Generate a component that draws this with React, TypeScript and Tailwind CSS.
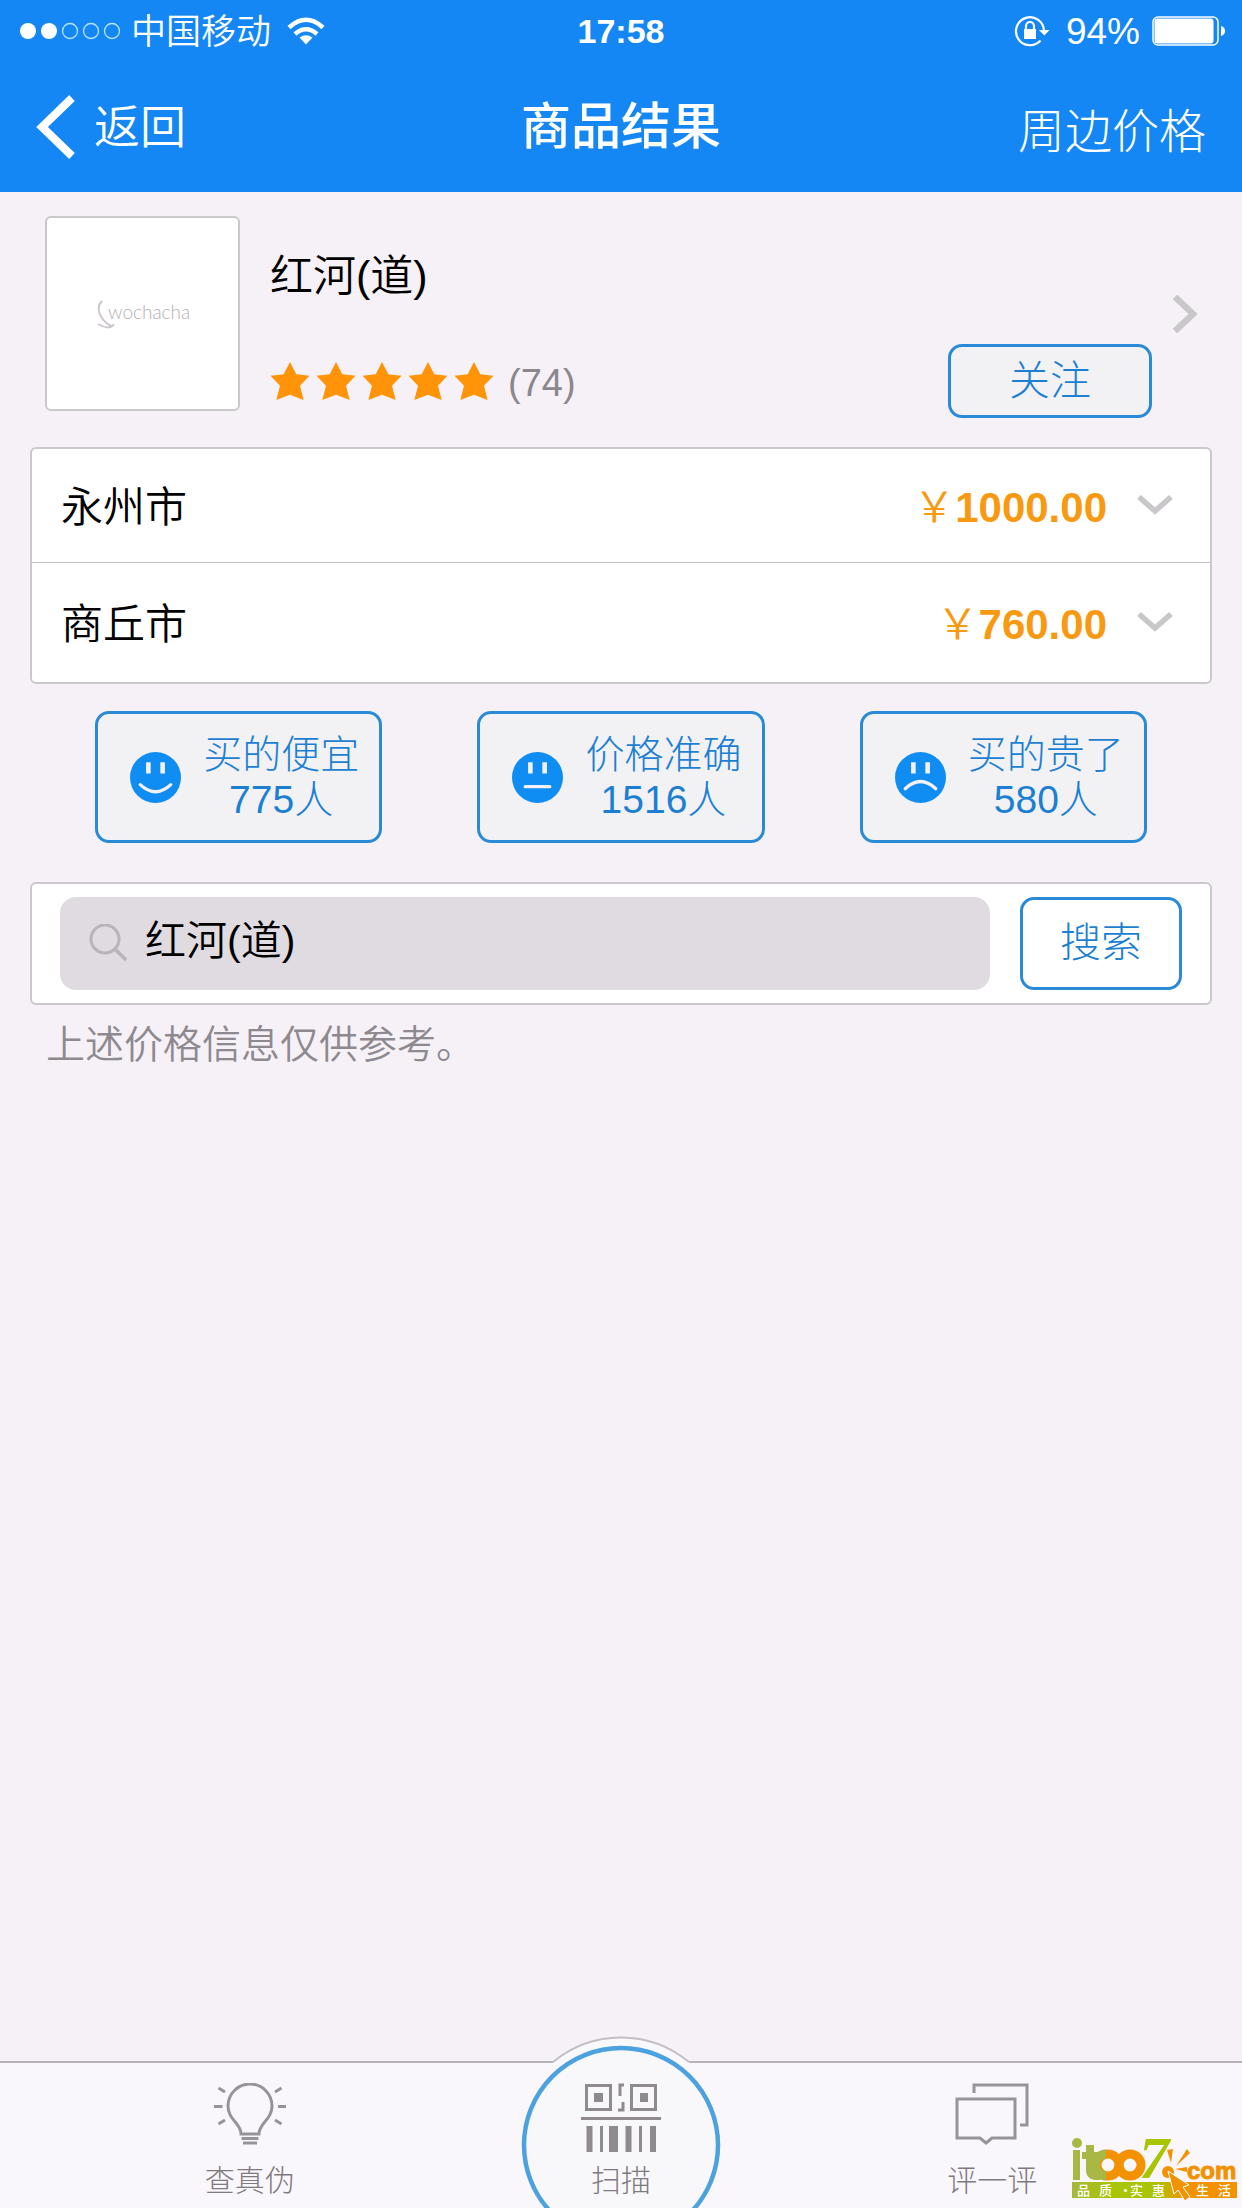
import type { ReactNode } from 'react';

type Mood = 'happy' | 'neutral' | 'sad';

const prices = [
  { city: '永州市', price: '1000.00' },
  { city: '商丘市', price: '760.00' },
];

const votes: { label: string; count: number; mood: Mood }[] = [
  { label: '买的便宜', count: 775, mood: 'happy' },
  { label: '价格准确', count: 1516, mood: 'neutral' },
  { label: '买的贵了', count: 580, mood: 'sad' },
];

const mouths: Record<Mood, string> = {
  happy: 'M10 32Q25 46 40 32',
  neutral: 'M13 34H37',
  sad: 'M10 36Q25 22 40 36',
};

const Face = ({ mood }: { mood: Mood }) => (
  <svg width="51" height="51" viewBox="0 0 50 50" fill="none" aria-hidden="true">
    <circle cx="25" cy="25" r="25" fill="#0f8df2" />
    <path d="M18 10V21M32 10V21" stroke="#f4f1f6" strokeWidth="4.500" />
    <path d={mouths[mood]} stroke="#f4f1f6" strokeWidth="3.200" strokeLinecap="round" />
  </svg>
);

const Star = () => (
  <svg width="40" height="40" viewBox="0 0 38 38" aria-hidden="true">
    <path
      d="M19 1L25 12.500L37.500 14L28.500 23.400L32 37L19 32L6 37L9.500 23.400L0.500 14L13 12.500Z"
      fill="#ff9408"
    />
  </svg>
);

const ChevronDown = () => (
  <svg width="36" height="22" viewBox="0 0 36 22" fill="none" aria-hidden="true">
    <path d="M2 2L18 16L34 2" stroke="#cac7cb" strokeWidth="5.500" />
  </svg>
);

const StatusBar = () => (
  <div className="grid h-[62px] grid-cols-3 items-center px-4">
    <div className="flex items-center pl-1">
      <svg width="101" height="18" viewBox="0 0 101 18" aria-hidden="true">
        <circle cx="8" cy="9" r="8" fill="#fff" />
        <circle cx="29" cy="9" r="8" fill="#fff" />
        {[50, 71, 92].map((cx) => (
          <circle key={cx} cx={cx} cy="9" r="7.500" fill="none" stroke="#b9e4ff" strokeWidth="1.3" />
        ))}
      </svg>
      <span className="ml-[10px] text-[35px] leading-none">中国移动</span>
      <svg className="ml-4" width="38" height="28" viewBox="0 0 38 28" fill="none" aria-hidden="true">
        <path d="M2 10.500Q19 -5 36 10.500" stroke="#fff" strokeWidth="4.5" />
        <path d="M8 17Q19 7.500 30 17" stroke="#fff" strokeWidth="4.5" />
        <path d="M12.500 20.500Q19 16 25.500 20.500L19 27.500Z" fill="#fff" />
      </svg>
    </div>
    <span className="text-center text-[34px] leading-none font-bold">17:58</span>
    <div className="flex items-center justify-end">
      <svg width="36" height="32" viewBox="0 0 36 32" fill="none" aria-hidden="true">
        <path d="M26.500 25.500A14 14 0 1 1 30 16" stroke="#fff" strokeWidth="2.200" />
        <path d="M25 15H35.500L30.300 20.500Z" fill="#fff" />
        <rect x="10" y="14" width="12" height="10" fill="#fff" />
        <path d="M12 14V11A4 4 0 0 1 20 11V14" stroke="#fff" strokeWidth="2.200" />
      </svg>
      <span className="mr-3 ml-4 text-[37px] leading-none">94%</span>
      <svg width="74" height="30" viewBox="0 0 74 30" fill="none" aria-hidden="true">
        <rect x="1" y="1" width="65" height="28" rx="5" stroke="#fff" strokeWidth="1.500" />
        <rect x="2.500" y="2.500" width="59" height="25" rx="3" fill="#fff" />
        <path d="M69 10Q73 11 73 15Q73 19 69 20Z" fill="#fff" />
      </svg>
    </div>
  </div>
);

const Header = () => (
  <header className="bg-[#1487f5] text-white">
    <StatusBar />
    <div className="grid h-[130px] grid-cols-3 items-center px-9">
      <a href="#back" className="flex items-center gap-[18px] text-[46px] leading-none">
        <svg width="40" height="64" viewBox="0 0 40 64" fill="none" aria-hidden="true">
          <path d="M36 3L6 32L36 61" stroke="#fff" strokeWidth="8" />
        </svg>
        返回
      </a>
      <h1 className="text-center text-[50px] leading-none font-medium">商品结果</h1>
      <a href="#nearby" className="pt-2 text-right text-[47px] leading-none font-light">周边价格</a>
    </div>
  </header>
);

const Product = () => (
  <section className="flex items-start pt-6 pr-11 pb-[29px] pl-[45px]">
    <div className="flex h-[195px] w-[195px] items-center justify-center rounded-md border-2 border-[#cbc8cc] bg-white">
      <svg width="94" height="32" viewBox="0 0 94 32" fill="none" role="img" aria-label="wochacha">
        <path d="M6 3C-1 10 4 22 15 28M2 26C8 30 15 31 18 26" stroke="#cdc8cd" strokeWidth="2" />
        <text x="12" y="21" fontSize="19" fill="#b5aeb5" fontFamily="Lato, sans-serif">
          wochacha
        </text>
      </svg>
    </div>
    <div className="flex-1 pt-[34px] pl-[30px]">
      <h2 className="text-[43px] leading-[52px] text-black">红河(道)</h2>
      <div className="mt-[42px] flex items-center justify-between">
        <div className="flex items-center gap-1.5">
          {[1, 2, 3, 4, 5].map((n) => (
            <Star key={n} />
          ))}
          <span className="pt-1 pl-2 text-[38px] leading-none text-[#8b878c]">(74)</span>
        </div>
        <button className="h-[74px] w-[204px] rounded-[14px] border-3 border-[#2a8ad6] bg-[#f2f2f5] text-[41px] leading-none font-light text-[#1c7fd2]">
          关注
        </button>
      </div>
    </div>
    <a href="#detail" aria-label="商品详情" className="flex h-[195px] items-center pl-5">
      <svg width="26" height="38" viewBox="0 0 26 38" fill="none">
        <path d="M3 2L21 19L3 36" stroke="#cac7cb" strokeWidth="6.500" />
      </svg>
    </a>
  </section>
);

const PriceList = () => (
  <ul className="mx-[30px] divide-y divide-[#c4c1c5] rounded-md border-2 border-[#cbc8cc] bg-white">
    {prices.map((item) => (
      <li key={item.city} className="h-[119px] first:h-[114px]">
        <button className="flex h-full w-full items-center pr-[37px] pl-[29px] text-[42px] leading-none">
          <span className="pt-1 text-black">{item.city}</span>
          <span className="ml-auto pt-1 text-[#f79a12]">
            {'\uffe5'}
            <span className="font-bold">{item.price}</span>
          </span>
          <span className="ml-[30px]">
            <ChevronDown />
          </span>
        </button>
      </li>
    ))}
  </ul>
);

const Votes = () => (
  <section className="mt-[27px] grid grid-cols-3 gap-[95px] px-[95px]">
    {votes.map((vote) => (
      <button
        key={vote.mood}
        className="flex h-33 items-center justify-center gap-[22px] rounded-[14px] border-3 border-[#2a8ad6] bg-[#f2f2f5] pl-3 text-[39px] leading-[45px] font-light text-[#1c7fd2]"
      >
        <Face mood={vote.mood} />
        <span>
          {vote.label}
          <br />
          {vote.count}人
        </span>
      </button>
    ))}
  </section>
);

const SearchBox = () => (
  <form className="mx-[30px] mt-[39px] flex gap-[30px] rounded-md border-2 border-[#cbc8cc] bg-white px-7 py-[13px]">
    <label className="flex h-[93px] flex-1 items-center rounded-2xl bg-[#dfdbe0] pl-[29px]">
      <svg width="40" height="40" viewBox="0 0 40 40" fill="none" aria-hidden="true">
        <circle cx="16" cy="15" r="14" stroke="#b8b4b9" strokeWidth="3" />
        <path d="M26 25L37 36" stroke="#b8b4b9" strokeWidth="3.500" />
      </svg>
      <input
        type="text"
        aria-label="搜索商品"
        defaultValue="红河(道)"
        className="min-w-0 flex-1 bg-transparent pb-1 pl-4 text-[41px] text-black outline-none"
      />
    </label>
    <button
      type="button"
      className="w-[162px] rounded-[14px] border-3 border-[#2a8ad6] text-[41px] leading-none font-light text-[#1c7fd2]"
    >
      搜索
    </button>
  </form>
);

const Tab = ({ label, href, children }: { label: string; href: string; children: ReactNode }) => (
  <a href={href} className="relative flex flex-col items-center pt-5">
    {children}
    <span className="mt-[18px] text-[30px] leading-9 font-light">{label}</span>
  </a>
);

const TabBar = () => (
  <nav className="relative grid h-[147px] grid-cols-3 border-t-2 border-[#b6b2b7] bg-[#faf7fc] px-16 text-[#7f7a80]">
    {/* raised disc behind the scan tab */}
    <svg
      className="absolute bottom-0 left-1/2 -translate-x-1/2"
      width="216"
      height="172"
      viewBox="0 0 216 172"
      fill="none"
      aria-hidden="true"
    >
      <path d="M40 26Q70 1.500 108 1.500Q146 1.500 176 26V30H40Z" fill="#f9f8fc" />
      <path d="M40 26Q70 1.500 108 1.500Q146 1.500 176 26" stroke="#c3bec2" strokeWidth="2" />
      <circle cx="108" cy="109" r="97" fill="#f8f8fb" stroke="#4ba2de" strokeWidth="4.500" />
    </svg>
    <Tab label="查真伪" href="#verify">
      <svg width="72" height="62" viewBox="0 0 72 62" fill="none" stroke="#989399" strokeWidth="3" aria-hidden="true">
        <path d="M27 51C27 40 14 37 14 23A22 22 0 0 1 58 23C58 37 45 40 45 51Z" />
        <path d="M27.500 55.500H44.500M29 60H43" />
        <path d="M0 23.500H8.500M64 23.500H72M4.500 5L11 9M67.500 5L61 9M4.500 41L11 37M67.500 41L61 37" />
      </svg>
    </Tab>
    <Tab label="扫描" href="#scan">
      <svg width="80" height="70" viewBox="0 0 80 70" fill="none" className="-mb-2" stroke="#8f8a90" aria-hidden="true">
        <path d="M5.500 2.500H29.500V26.500H5.500ZM50.500 2.500H74.500V26.500H50.500Z" strokeWidth="3" />
        <path d="M13 10H22V19H13ZM59 10H67V19H59Z" fill="#8f8a90" stroke="none" />
        <path d="M43 2H39V13M42 19V27H37" strokeWidth="3" />
        <path d="M0 35.500H80" strokeWidth="3" />
        <path d="M8.500 43V69M72 43V69M47.500 43V69" strokeWidth="6" />
        <path d="M20.500 43V69M59.500 43V69" strokeWidth="3" />
        <path d="M32.500 43V69" strokeWidth="9" />
      </svg>
    </Tab>
    <Tab label="评一评" href="#review">
      <svg width="74" height="62" viewBox="0 0 74 62" fill="none" stroke="#989399" strokeWidth="3" aria-hidden="true">
        <path d="M2 16H60V55H37L31 60L25 55H2Z" />
        <path d="M19 10V2H72V42H65" />
      </svg>
    </Tab>
  </nav>
);

const Watermark = () => (
  <svg
    className="absolute right-1 bottom-1"
    width="168"
    height="84"
    viewBox="0 -16 168 84"
    role="img"
    aria-label="itoo7.com 品质·实惠生活"
  >
    <defs>
      <linearGradient id="strip" x1="0" x2="1">
        <stop offset="0" stopColor="#a6b93a" />
        <stop offset="0.25" stopColor="#a9c400" />
        <stop offset="0.5" stopColor="#a9c400" />
        <stop offset="0.7" stopColor="#f39200" />
      </linearGradient>
    </defs>
    <circle cx="7" cy="7" r="5" fill="#a9b745" />
    <path d="M3 14H10V44H3Z" fill="#a9b745" />
    <path d="M16 9H24V16H31V23H24V33Q24 36 30 35V44Q16 45 16 34V23H12V16H16Z" fill="#a9b745" />
    <circle cx="38" cy="29" r="11" fill="none" stroke="#f39200" strokeWidth="9" />
    <path d="M36 18A11 11 0 0 0 36 40" fill="none" stroke="#a9b745" strokeWidth="9" />
    <circle cx="60" cy="29" r="11" fill="none" stroke="#f39200" strokeWidth="9" />
    <text x="69" y="42" fontSize="60" fontWeight="700" fontStyle="italic" fontFamily="'Liberation Serif', serif" fill="#a9c400">
      7
    </text>
    <rect x="2" y="46" width="165" height="16" fill="url(#strip)" />
    <text x="117" y="43" fontSize="24" fontWeight="700" fontFamily="'Liberation Sans', sans-serif" fill="#f39200" stroke="#f39200">
      com
    </text>
    <path d="M97 14L103 13L101 27ZM117 13L120 17L106 30ZM105 33L117 31V36Z" fill="#f39200" />
    <circle cx="98" cy="36" r="6" fill="#f39200" />
    <path d="M98 35L119 49L113 51L120 61L115 65L108 54L104 58Z" fill="#f39200" stroke="#fff" strokeWidth="1" />
    <g fontSize="13" fontWeight="500" fill="#fff" fontFamily="'Noto Sans CJK SC', sans-serif">
      <text x="7" y="59">品</text>
      <text x="29" y="59">质</text>
      <text x="49" y="59">·</text>
      <text x="60" y="59">实</text>
      <text x="82" y="59">惠</text>
      <text x="126" y="59">生</text>
      <text x="148" y="59">活</text>
    </g>
  </svg>
);

const App = () => (
  <div className="relative flex min-h-screen flex-col bg-[#f5f1f7] font-['Liberation_Sans','Noto_Sans_CJK_SC',sans-serif] font-[350]">
    <Header />
    <main className="flex-1">
      <Product />
      <PriceList />
      <Votes />
      <SearchBox />
      <p className="px-[46px] pt-4 text-[39px] leading-12 text-[#8e898f]">上述价格信息仅供参考。</p>
    </main>
    <TabBar />
    <Watermark />
  </div>
);

export default App;
